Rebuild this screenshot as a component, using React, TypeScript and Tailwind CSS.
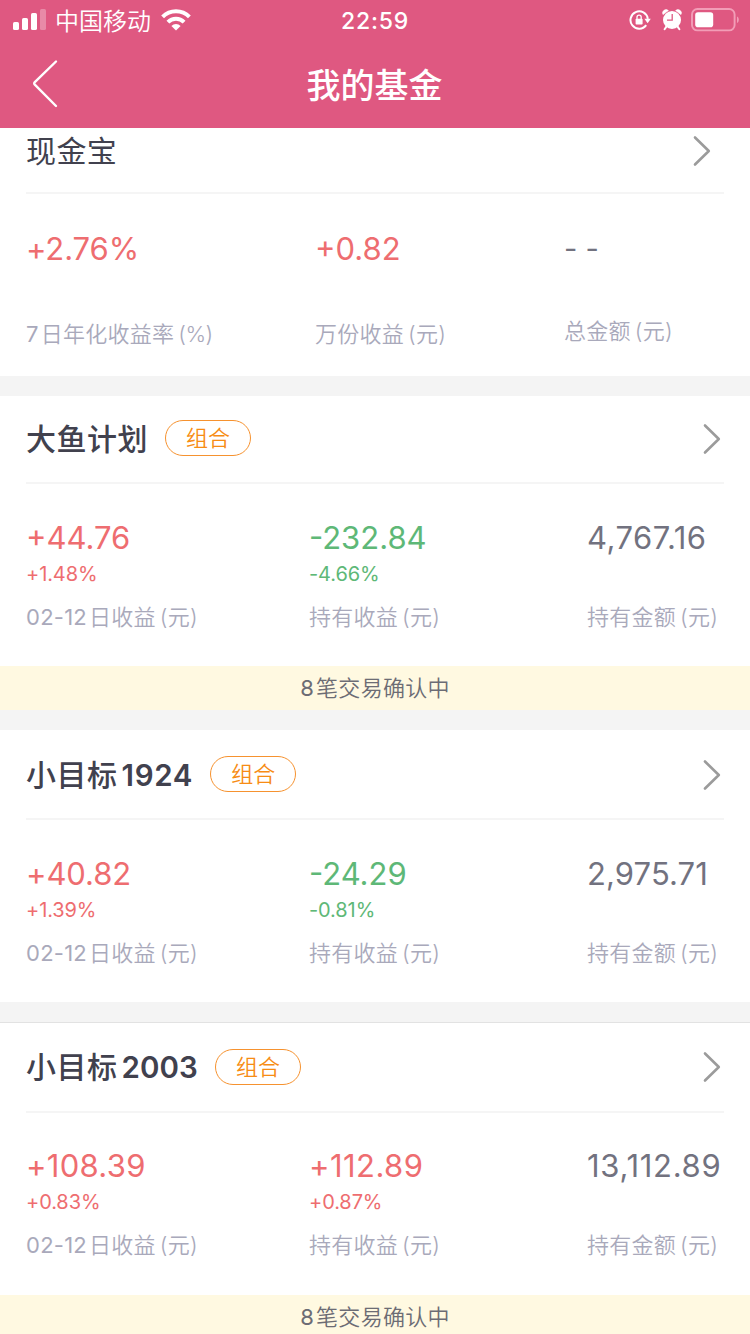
import clsx from 'clsx';

type Tone = 'up' | 'down' | 'plain';

interface Metric {
  value: string;
  rate?: string;
  label: string;
  tone: Tone;
  spacing?: string;
}

interface Portfolio {
  name: string;
  headClass: string;
  tagClass: string;
  bodyClass: string;
  digitClass?: string;
  metrics: Metric[];
  notice?: string;
}

const toneClass: Record<Tone, string> = {
  up: 'text-[#ee6d70]',
  down: 'text-[#5eb877]',
  plain: 'text-[#72727f]',
};

const portfolios: Portfolio[] = [
  {
    name: '大鱼计划',
    headClass: 'h-[86px] pb-px',
    tagClass: 'ml-[17px] mb-px',
    bodyClass: 'pt-[35px]',
    metrics: [
      { value: '+44.76', rate: '+1.48%', label: '02-12日收益(元)', tone: 'up' },
      { value: '-232.84', rate: '-4.66%', label: '持有收益(元)', tone: 'down' },
      { value: '4,767.16', label: '持有金额(元)', tone: 'plain', spacing: 'tracking-[0.5px]' },
    ],
    notice: '8笔交易确认中',
  },
  {
    name: '小目标1924',
    headClass: 'h-[88px] pt-px',
    tagClass: 'ml-[17px] mb-px',
    bodyClass: 'pt-[35px]',
    digitClass: 'tracking-[0.7px]',
    metrics: [
      { value: '+40.82', rate: '+1.39%', label: '02-12日收益(元)', tone: 'up', spacing: 'tracking-[-0.1px]' },
      { value: '-24.29', rate: '-0.81%', label: '持有收益(元)', tone: 'down' },
      { value: '2,975.71', label: '持有金额(元)', tone: 'plain', spacing: 'tracking-[0.1px]' },
    ],
  },
  {
    name: '小目标2003',
    headClass: 'h-[89px] border-t border-[#e2e2e2]',
    tagClass: 'ml-[17px]',
    bodyClass: 'pt-[34px]',
    digitClass: 'tracking-[0.1px]',
    metrics: [
      { value: '+108.39', rate: '+0.83%', label: '02-12日收益(元)', tone: 'up', spacing: 'tracking-[0.3px]' },
      { value: '+112.89', rate: '+0.87%', label: '持有收益(元)', tone: 'up', spacing: 'tracking-[0.45px]' },
      { value: '13,112.89', label: '持有金额(元)', tone: 'plain', spacing: 'tracking-[0.7px]' },
    ],
    notice: '8笔交易确认中',
  },
];

// Adds a thin gap where Chinese and Latin runs meet
function MixedText({ text, latinClass }: { text: string; latinClass?: string }) {
  const runs = text.match(/\([^)]*\)|[\u4e00-\u9fff]+|[^\u4e00-\u9fff()]+/g) ?? [];
  return (
    <>
      {runs.map((run, i) => (
        <span
          key={i}
          className={clsx(
            i > 0 && (run.startsWith('(') ? 'ml-[4px]' : 'ml-[2px]'),
            run === '(%)' && 'tracking-[-0.5px]',
            /^[\d-]+$/.test(run) && (latinClass ?? 'font-normal')
          )}
        >
          {run}
        </span>
      ))}
    </>
  );
}

function ArrowRight() {
  return (
    <svg className="h-[32px] w-[20px]" viewBox="0 0 20 32" fill="none" stroke="#9b9b9b" strokeWidth="2.6" strokeLinecap="round" strokeLinejoin="round">
      <path d="M3 2.5 16.8 16 3 29.5" />
    </svg>
  );
}

function StatusBar() {
  return (
    <div className="grid h-10 grid-cols-[1fr_auto_1fr] items-center">
      <div className="flex items-center pl-[13px]">
        <svg className="h-[22px] w-[33px]" viewBox="0 0 33 22" fill="#fff">
          <rect x="0" y="13" width="6" height="8" rx="1.6" />
          <rect x="9" y="9" width="6" height="12" rx="1.6" />
          <rect x="18" y="4" width="6" height="17" rx="1.6" />
          <rect x="27" y="0" width="6" height="21" rx="1.6" opacity="0.3" />
        </svg>
        <span className="mt-[3px] ml-[9px] text-[24px] leading-none font-[350]">中国移动</span>
        <svg className="ml-[10px] h-[22px] w-[30px]" viewBox="0 0 30 22" fill="none" stroke="#fff" strokeWidth="4">
          <path d="M1.6 7.8a19 19 0 0 1 26.8 0" />
          <path d="M6.9 13.2a11.5 11.5 0 0 1 16.2 0" />
          <path d="M15 21.5 10.4 17a6.5 6.5 0 0 1 9.2 0Z" fill="#fff" stroke="none" />
        </svg>
      </div>
      <span className="mt-[2px] text-[23px] leading-none font-medium tracking-[0.8px]">22:59</span>
      <div className="flex items-center justify-end pr-[11px]">
        <svg className="h-[22px] w-[22px]" viewBox="0 0 22 22" fill="none">
          <path d="M17.2 16.2A8.7 8.7 0 1 1 18.8 9.8" stroke="#fff" strokeWidth="2" />
          <path d="M15.4 9.8h6.4l-3.2 4.4Z" fill="#fff" />
          <rect x="6.6" y="9.8" width="7" height="5.8" rx="0.8" fill="#fff" />
          <path d="M8 10V8.2a2.1 2.1 0 0 1 4.2 0V10" stroke="#fff" strokeWidth="1.3" />
        </svg>
        <svg className="ml-[11px] h-[22px] w-[20px]" viewBox="0 0 20 22" fill="none">
          <circle cx="10" cy="11" r="9" fill="#fff" />
          <path d="M1 5.6A3.4 3.4 0 0 1 6.4 1.6ZM19 5.6a3.4 3.4 0 0 0-5.4-4Z" fill="#fff" stroke="#fff" strokeWidth="0.6" />
          <path d="M4.4 17.6 2.6 20.2M15.6 17.6l1.8 2.6" stroke="#fff" strokeWidth="2" strokeLinecap="round" />
          <path d="M10.2 5V11.2H5" stroke="#df5881" strokeWidth="1.3" />
        </svg>
        <svg className="ml-[9px] h-[24px] w-[48px]" viewBox="0 0 48 24" fill="none">
          <rect x="1" y="1" width="42.6" height="21.4" rx="5.4" stroke="#f29db7" strokeWidth="1.9" />
          <rect x="4.2" y="4.2" width="18" height="15" rx="2.8" fill="#fff" />
          <path d="M46 8.5v6.4c1.3-.6 1.8-1.8 1.8-3.2s-.5-2.6-1.8-3.2Z" fill="#f29db7" />
        </svg>
      </div>
    </div>
  );
}

function MetricLabel({ text }: { text: string }) {
  return (
    <div className="text-[22px] leading-[30px] font-[350] tracking-[0.25px] whitespace-nowrap text-[#a9a9bb]">
      <MixedText text={text} />
    </div>
  );
}

function MetricCell({ metric }: { metric: Metric }) {
  return (
    <div>
      <div className={clsx('h-[38px] text-[31px] leading-[38px] whitespace-nowrap', toneClass[metric.tone], metric.spacing)}>
        {metric.value}
      </div>
      <div className={clsx('mb-[11px] h-[34px] text-[20px] leading-[34px] tracking-[-0.1px]', toneClass[metric.tone])}>
        {metric.rate}
      </div>
      <MetricLabel text={metric.label} />
    </div>
  );
}

function PortfolioCard({ item }: { item: Portfolio }) {
  return (
    <section className="bg-white">
      <div className={clsx('flex items-center pr-[28px] pl-[26px]', item.headClass)}>
        <h2 className="text-[30px] leading-[40px] font-medium tracking-[0.5px] text-[#41414e]">
          <MixedText text={item.name} latinClass={clsx('pl-[2px] text-[29.5px] font-semibold', item.digitClass)} />
        </h2>
        <span className={clsx('flex h-9 w-[86px] items-center justify-center rounded-full border border-[#f6922f] text-[22px] leading-none font-[350] text-[#f78c14]', item.tagClass)}>
          组合
        </span>
        <span className="ml-auto">
          <ArrowRight />
        </span>
      </div>
      <div className="mx-[26px] h-0.5 bg-[#f5f5f5]" />
      <div className={clsx('grid h-[182px] grid-cols-[283px_278px_auto] pl-[26px]', item.bodyClass)}>
        {item.metrics.map((metric, i) => (
          <MetricCell key={i} metric={metric} />
        ))}
      </div>
      {item.notice && (
        <div className="flex h-11 items-center justify-center bg-[#fff9e1] text-[22px] leading-none font-[350] tracking-[0.3px] text-[#6c6c74]">
          <MixedText text={item.notice} />
        </div>
      )}
    </section>
  );
}

export default function App() {
  return (
    <div className="flex h-[1334px] w-[750px] flex-col overflow-hidden bg-[#f4f4f4] font-['Inter','Noto_Sans_CJK_SC',sans-serif]">
      <header className="h-32 shrink-0 bg-[#df5881] text-white">
        <StatusBar />
        <div className="grid h-[88px] grid-cols-[1fr_auto_1fr] items-center">
          <svg className="ml-[30px] h-[50px] w-[30px]" viewBox="0 0 30 50" fill="none" stroke="#fff" strokeWidth="2.4" strokeLinecap="round" strokeLinejoin="round">
            <path d="M26 2.5 4.8 23.2q-1.2 1.2 0 2.4L26 47" />
          </svg>
          <h1 className="mt-[3px] mr-px text-[34px] leading-[48px] font-medium">我的基金</h1>
        </div>
      </header>

      <main className="flex flex-col gap-5">
        <section className="h-[248px] shrink-0 bg-white">
          <div className="flex h-16 items-start justify-between pr-[38px] pl-[26px]">
            <h2 className="mt-[3px] text-[30px] leading-[40px] tracking-[0.4px] text-[#41414e]">现金宝</h2>
            <span className="mt-[7px]">
              <ArrowRight />
            </span>
          </div>
          <div className="mx-[26px] h-0.5 bg-[#f5f5f5]" />
          <div className="grid grid-cols-[289px_249px_auto] pt-[36px] pl-[26px]">
            <div className="flex flex-col gap-[51px]">
              <div className="text-[31px] leading-[38px] tracking-[-0.1px] text-[#ee6d70]">+2.76%</div>
              <MetricLabel text="7日年化收益率(%)" />
            </div>
            <div className="flex flex-col gap-[51px]">
              <div className="text-[31px] leading-[38px] text-[#ee6d70]">+0.82</div>
              <MetricLabel text="万份收益(元)" />
            </div>
            <div className="flex flex-col gap-[48px]">
              <div className="text-[29px] leading-[38px] text-[#72727f]">- -</div>
              <MetricLabel text="总金额(元)" />
            </div>
          </div>
        </section>

        {portfolios.map((item) => (
          <PortfolioCard key={item.name} item={item} />
        ))}
      </main>
    </div>
  );
}
